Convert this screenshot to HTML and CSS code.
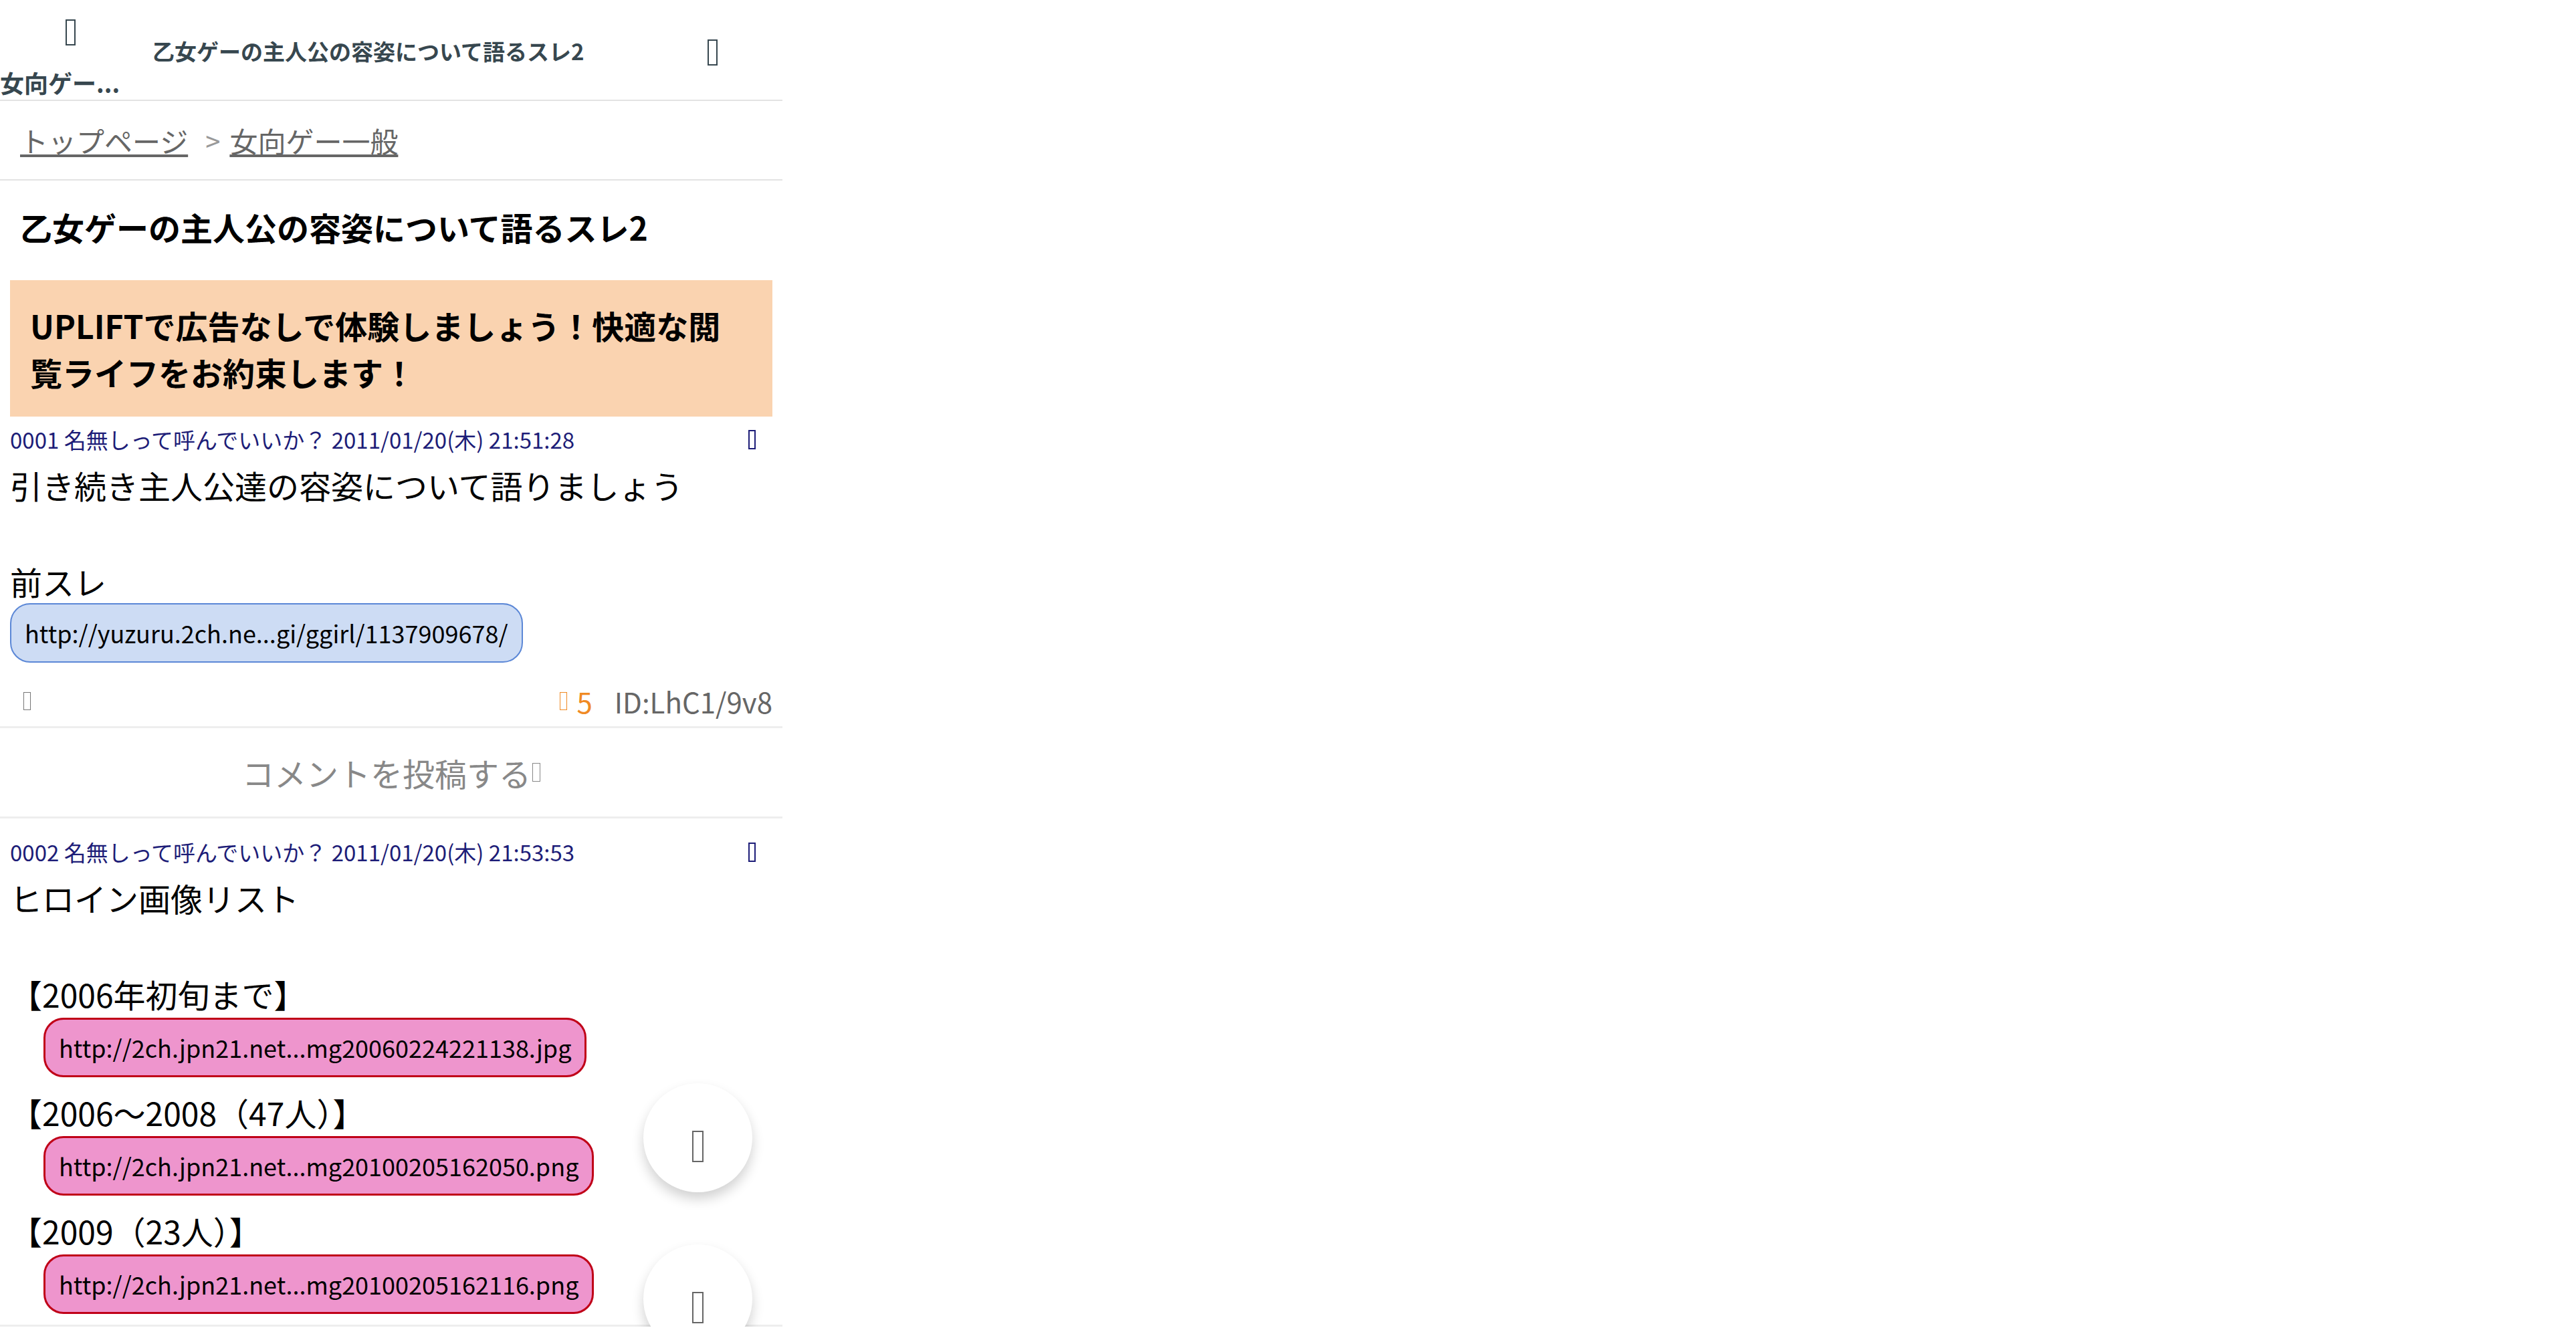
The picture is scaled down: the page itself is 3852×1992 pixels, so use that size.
FILE: index.html
```html
<!DOCTYPE html>
<html lang="ja">
<head>
    <meta charset="UTF-8">
    <meta name="viewport" content="width=device-width, initial-scale=1.0">
    <title>乙女ゲーの主人公の容姿について語るスレ2</title>
    <link rel="stylesheet" href="styles.css">
</head>
<body>

<div class="page">
    <header class="app-bar">
        <div class="bar-side bar-left">
            <span class="tofu tofu-bar"></span>
            <span class="bar-label">女向ゲー...</span>
        </div>
        <div class="bar-title">乙女ゲーの主人公の容姿について語るスレ2</div>
        <div class="bar-side bar-right">
            <span class="tofu tofu-bar"></span>
        </div>
    </header>

    <nav class="crumbs">
        <a href="#">トップページ</a>
        <span class="crumb-sep">&gt;</span>
        <a href="#">女向ゲー一般</a>
    </nav>

    <h1 class="thread-title">乙女ゲーの主人公の容姿について語るスレ2</h1>

    <div class="promo">UPLIFTで広告なしで体験しましょう！快適な閲覧ライフをお約束します！</div>

    <article class="post">
        <div class="post-head">
            <span>0001 名無しって呼んでいいか？ 2011/01/20(木) 21:51:28</span>
            <span class="tofu tofu-head"></span>
        </div>
        <div class="post-body">
            引き続き主人公達の容姿について語りましょう<br>
            <br>
            前スレ
            <a class="url url-thread" href="#">http://yuzuru.2ch.ne...gi/ggirl/1137909678/</a>
        </div>
        <div class="post-foot">
            <span class="tofu tofu-foot"></span>
            <div class="foot-right">
                <span class="tofu tofu-foot tofu-orange"></span>
                <span class="res-count">5</span>
                <span class="post-id">ID:LhC1/9v8</span>
            </div>
        </div>
    </article>

    <div class="comment-btn">コメントを投稿する<span class="tofu tofu-small"></span></div>

    <article class="post">
        <div class="post-head">
            <span>0002 名無しって呼んでいいか？ 2011/01/20(木) 21:53:53</span>
            <span class="tofu tofu-head"></span>
        </div>
        <div class="post-body">
            ヒロイン画像リスト<br>
            <br>
            【2006年初旬まで】
            <a class="url url-image" href="#">http://2ch.jpn21.net...mg20060224221138.jpg</a>
            【2006～2008（47人）】
            <a class="url url-image" href="#">http://2ch.jpn21.net...mg20100205162050.png</a>
            【2009（23人）】
            <a class="url url-image" href="#">http://2ch.jpn21.net...mg20100205162116.png</a>
        </div>
    </article>

    <div class="fab-stack">
        <div class="fab"><span class="tofu tofu-fab"></span></div>
        <div class="fab"><span class="tofu tofu-fab tofu-orange"></span></div>
    </div>
</div>

</body>
</html>
```

FILE: styles.css
```css
body {
    margin: 0;
    padding: 0;
    background: #fff;
    font-family: "Noto Sans CJK JP", "Noto Sans", sans-serif;
    color: #000;
}

.page {
    position: relative;
    width: 1170px;
}

/* missing icon-font glyphs show as empty boxes */
.tofu {
    display: inline-block;
    box-sizing: border-box;
    border: 2px solid currentColor;
    flex: none;
}

.tofu-bar {
    width: 15px;
    height: 39px;
}

.tofu-head {
    width: 11px;
    height: 29px;
}

.tofu-foot {
    width: 11px;
    height: 27px;
    border-width: 1.5px;
    color: #777;
}

.tofu-orange {
    color: #f08a24;
}

.tofu-small {
    width: 12px;
    height: 28px;
    border-width: 1.5px;
    margin-left: 2px;
}

.tofu-fab {
    width: 17px;
    height: 47px;
    color: #666;
    margin-top: 26px;
}

/* top bar */
.app-bar {
    display: flex;
    height: 149px;
    border-bottom: 2px solid #e3e3e3;
    color: #37474f;
    font-weight: 700;
    font-size: 33px;
    line-height: 40px;
}

.bar-side {
    width: 210px;
    flex: none;
    display: flex;
    flex-direction: column;
    align-items: center;
    padding-top: 29px;
    box-sizing: border-box;
}

.bar-right {
    padding-top: 59px;
}

.bar-label {
    align-self: flex-start;
    margin-top: 35px;
    font-size: 36px;
    white-space: nowrap;
}

.bar-title {
    flex: 1;
    padding: 56px 0 0 18px;
    white-space: nowrap;
    overflow: hidden;
}

/* breadcrumb */
.crumbs {
    display: flex;
    align-items: center;
    height: 117px;
    padding-left: 30px;
    border-bottom: 2px solid #e3e3e3;
    font-size: 42px;
    color: #666;
}

.crumbs a {
    color: #666;
}

.crumb-sep {
    color: #999;
    font-size: 40px;
    margin: 0 14px 0 26px;
}

.thread-title {
    margin: 0;
    padding: 34px 30px 45px;
    font-size: 48px;
    font-weight: 700;
}

.promo {
    margin: 0 15px;
    padding: 32px 30px;
    background: #fad3b0;
    font-size: 48px;
    font-weight: 700;
}

/* posts */
.post {
    padding: 9px 15px 0;
    border-bottom: 3px solid #eeeeee;
}

.post-head {
    display: flex;
    justify-content: space-between;
    align-items: center;
    padding-right: 25px;
    font-size: 33px;
    line-height: 50px;
    color: #1d1d78;
}

.post-body {
    margin-top: 7px;
    font-size: 48px;
    line-height: 72px;
}

.url {
    display: table;
    box-sizing: border-box;
    padding: 12px 20px;
    border: 2px solid;
    border-radius: 30px;
    font-size: 36px;
    line-height: 61px;
    color: #000;
    text-decoration: none;
}

.url-thread {
    background: #cddcf4;
    border-color: #5b87d6;
    margin-top: -3px;
}

.url-image {
    padding: 11px 20px;
    border-width: 3px;
    background: #ee95cd;
    border-color: #c00018;
    margin: 0 0 16px 50px;
}

.post-foot {
    display: flex;
    justify-content: space-between;
    align-items: center;
    height: 95px;
    padding: 20px 0 0 20px;
    box-sizing: border-box;
}

.foot-right {
    display: flex;
    align-items: center;
    font-size: 42px;
}

.res-count {
    color: #f08a24;
    margin: 0 33px 0 14px;
}

.post-id {
    color: #666;
}

.comment-btn {
    display: flex;
    justify-content: center;
    align-items: center;
    height: 132px;
    margin-bottom: 16px;
    border-bottom: 3px solid #eeeeee;
    font-size: 48px;
    color: #888;
}

/* floating buttons */
.fab-stack {
    position: absolute;
    left: 962px;
    top: 1620px;
    display: flex;
    flex-direction: column;
    gap: 78px;
}

.fab {
    width: 163px;
    height: 163px;
    border-radius: 50%;
    background: #fff;
    box-shadow: 0 10px 18px rgba(0, 0, 0, 0.18);
    display: flex;
    justify-content: center;
    align-items: center;
}
```
